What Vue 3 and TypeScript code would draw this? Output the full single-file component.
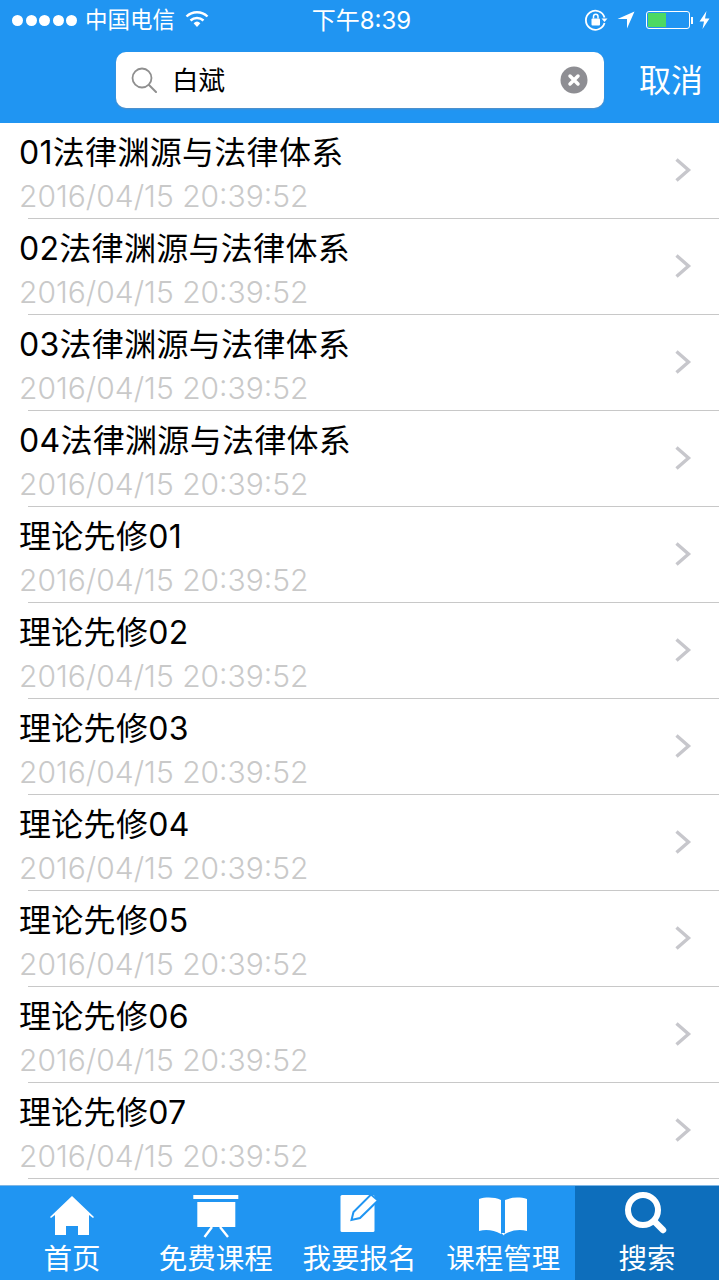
<script setup lang="ts">
const courses = [
  '01法律渊源与法律体系',
  '02法律渊源与法律体系',
  '03法律渊源与法律体系',
  '04法律渊源与法律体系',
  '理论先修01',
  '理论先修02',
  '理论先修03',
  '理论先修04',
  '理论先修05',
  '理论先修06',
  '理论先修07',
]

const tabs = [
  { key: 'home', label: '首页' },
  { key: 'board', label: '免费课程' },
  { key: 'edit', label: '我要报名' },
  { key: 'book', label: '课程管理' },
  { key: 'search', label: '搜索' },
]
</script>

<template>
  <div class="page">
    <header class="head">
      <div class="status">
        <div class="status-left">
          <span class="dots"><i v-for="n in 5" :key="n" /></span>
          <span class="carrier">中国电信</span>
          <svg class="wifi" width="24" height="18" viewBox="0 0 24 18">
            <path d="M1.500 6.500a15 15 0 0 1 21 0" fill="none" stroke="#fff" stroke-width="2.400" />
            <path d="M5.500 10.500a9.500 9.500 0 0 1 13 0" fill="none" stroke="#fff" stroke-width="2.400" />
            <path d="M8.600 13.200a5 5 0 0 1 6.800 0L12 17z" fill="#fff" />
          </svg>
        </div>
        <div class="clock">下午8:39</div>
        <div class="status-right">
          <svg width="24" height="24" viewBox="0 0 24 24">
            <path d="M20.500 9.500A9.500 9.500 0 1 0 20.500 15" fill="none" stroke="#fff" stroke-width="1.800" />
            <path d="M17.500 10.500h6l-3 3.500z" fill="#fff" />
            <rect x="7.500" y="10.500" width="8.500" height="7" rx="1" fill="#fff" />
            <path d="M9.500 10.500V8.500a2.200 2.200 0 0 1 4.500 0v2" fill="none" stroke="#fff" stroke-width="1.500" />
          </svg>
          <svg class="arrow" width="18" height="18" viewBox="0 0 18 18">
            <path d="M0.500 8 17.500 0.500 10 17.500V8z" fill="#fff" />
          </svg>
          <div class="battery"><div class="battery-fill" /></div>
          <span class="battery-tip" />
          <svg class="bolt" width="11" height="18" viewBox="0 0 11 18">
            <path d="M7.500 0 0.500 10.500H5L3.500 18 10.500 7.500H6z" fill="#fff" />
          </svg>
        </div>
      </div>
      <div class="search-row">
        <div class="search-box">
          <svg width="26" height="26" viewBox="0 0 26 26">
            <circle cx="11" cy="11" r="9.500" fill="none" stroke="#8f8f8f" stroke-width="1.800" />
            <path d="M18 18l7 7" stroke="#8f8f8f" stroke-width="2" stroke-linecap="round" />
          </svg>
          <span class="search-text">白斌</span>
          <svg class="clear" width="28" height="28" viewBox="0 0 28 28">
            <circle cx="14" cy="14" r="13.500" fill="#8e8e93" />
            <path d="M10 10l8 8M18 10l-8 8" stroke="#fff" stroke-width="3.500" stroke-linecap="round" />
          </svg>
        </div>
        <span class="cancel">取消</span>
      </div>
    </header>

    <ul class="list">
      <li v-for="title in courses" :key="title" class="row">
        <div class="row-body">
          <div class="title">{{ title }}</div>
          <div class="date">2016/04/15 20:39:52</div>
        </div>
        <svg class="chev" width="18" height="26" viewBox="0 0 18 26">
          <path d="M2.500 2.500 14.500 13 2.500 23.500" fill="none" stroke="#c7c7cc" stroke-width="3.400" />
        </svg>
      </li>
    </ul>

    <nav class="tabs">
      <div v-for="tab in tabs" :key="tab.key" class="tab" :class="{ active: tab.key === 'search' }">
        <svg class="tab-icon" width="56" height="48" viewBox="0 0 56 48">
          <template v-if="tab.key === 'home'">
            <path d="M6 23 28 2 50 23l-1 1-4-3V41H34V32H22V41H11V21l-4 3z" fill="#fff" />
          </template>
          <template v-else-if="tab.key === 'board'">
            <rect x="5.300" y="1" width="45" height="4" fill="#fff" />
            <rect x="9.300" y="8" width="38" height="25" fill="#fff" />
            <path d="M24 33 16.500 43M32 33l8 10" stroke="#fff" stroke-width="2.400" fill="none" />
          </template>
          <template v-else-if="tab.key === 'edit'">
            <rect x="9.500" y="1" width="34" height="37" rx="1.500" fill="#fff" />
            <path d="M20.500 26 22.500 18 40 0.500 47 6.500 29 24z" fill="#fff" stroke="#2095f2" stroke-width="2" />
          </template>
          <template v-else-if="tab.key === 'book'">
            <path d="M4 5c7-2 15-2 22 1v34c-7-4-15-5-22-3z" fill="#fff" />
            <path d="M52 5c-7-2-15-2-22 1v34c7-4 15-5 22-3z" fill="#fff" />
            <path d="M26 39l3 2.500 1-2.500z" fill="#fff" />
          </template>
          <template v-else>
            <circle cx="24" cy="16" r="15" fill="none" stroke="#fff" stroke-width="6" />
            <path d="M36 28l8 8" stroke="#fff" stroke-width="6.500" stroke-linecap="round" />
          </template>
        </svg>
        <span class="tab-label">{{ tab.label }}</span>
      </div>
    </nav>
  </div>
</template>

<style>
html, body {
  margin: 0;
  background: #fff;
}
</style>

<style scoped>
.page {
  width: 719px;
  height: 1280px;
  display: flex;
  flex-direction: column;
  overflow: hidden;
  background: #fff;
  font-family: Inter, "Noto Sans CJK SC", sans-serif;
}

.head {
  height: 123px;
  background: #2095f2;
  color: #fff;
  display: flex;
  flex-direction: column;
}

.status {
  height: 40px;
  display: grid;
  grid-template-columns: 1fr auto 1fr;
  align-items: center;
  padding: 0 9px 0 12px;
  font-size: 22.500px;
}

.status-left {
  display: flex;
  align-items: center;
}

.dots {
  display: flex;
  gap: 2.500px;
  margin-right: 8px;
}

.dots i {
  width: 11px;
  height: 11px;
  border-radius: 50%;
  background: #fff;
}

.carrier,
.clock {
  margin-top: -4px;
}

.wifi {
  margin-left: 10px;
  margin-top: -2px;
}

.clock {
  font-size: 24px;
  margin-left: 1px;
}

.status-right {
  display: flex;
  align-items: center;
  justify-content: flex-end;
}

.arrow {
  margin: 0 11px 0 9px;
}

.battery {
  width: 44px;
  height: 18px;
  box-sizing: border-box;
  border: 1px solid #fff;
  border-radius: 3px;
  padding: 1px;
}

.battery-fill {
  width: 18px;
  height: 100%;
  background: #4cd964;
}

.battery-tip {
  width: 2px;
  height: 7px;
  background: #fff;
  margin-left: 1px;
}

.bolt {
  margin-left: 6px;
}

.search-row {
  height: 56px;
  margin-top: 12px;
  display: flex;
  align-items: center;
  padding-left: 116px;
}

.search-box {
  width: 488px;
  height: 56px;
  box-sizing: border-box;
  display: flex;
  align-items: center;
  padding: 0 16px 0 15px;
  background: #fff;
  border-radius: 10px;
  box-shadow: 0 1px 2px #5c8fc0;
}

.search-text {
  margin: -3px 0 0 15px;
  font-size: 26.500px;
  color: #000;
}

.clear {
  margin-left: auto;
}

.cancel {
  margin: -4px 0 0 35px;
  font-size: 32px;
}

.list {
  flex: 1;
  margin: 0;
  padding: 0;
  list-style: none;
}

.row {
  height: 96px;
  box-sizing: border-box;
  display: flex;
  align-items: center;
  padding: 0 27px 0 19px;
  position: relative;
}

.row::after {
  content: "";
  position: absolute;
  left: 28px;
  right: 0;
  bottom: 0;
  height: 1px;
  background: #c8c8c8;
}

.row-body {
  flex: 1;
  min-width: 0;
  margin-top: 6px;
}

.title {
  font-size: 32px;
  line-height: 44px;
  letter-spacing: 0.300px;
  color: #000;
}

.date {
  font-size: 30px;
  font-weight: 300;
  line-height: 43px;
  color: #c9c9c9;
}

.chev {
  flex: none;
  margin-top: -2px;
}

.tabs {
  height: 94px;
  display: flex;
  background: #2095f2;
  box-shadow: 0 -1px 0 #7fb6e4;
}

.tab {
  flex: 1;
  min-width: 0;
  display: flex;
  flex-direction: column;
  align-items: center;
  color: #fff;
}

.tab.active {
  background: #0d6ebc;
}

.tab-icon {
  margin-top: 8px;
  flex: none;
  overflow: visible;
}

.tab-label {
  font-size: 28.500px;
  line-height: 36px;
  margin-top: -1px;
}
</style>
